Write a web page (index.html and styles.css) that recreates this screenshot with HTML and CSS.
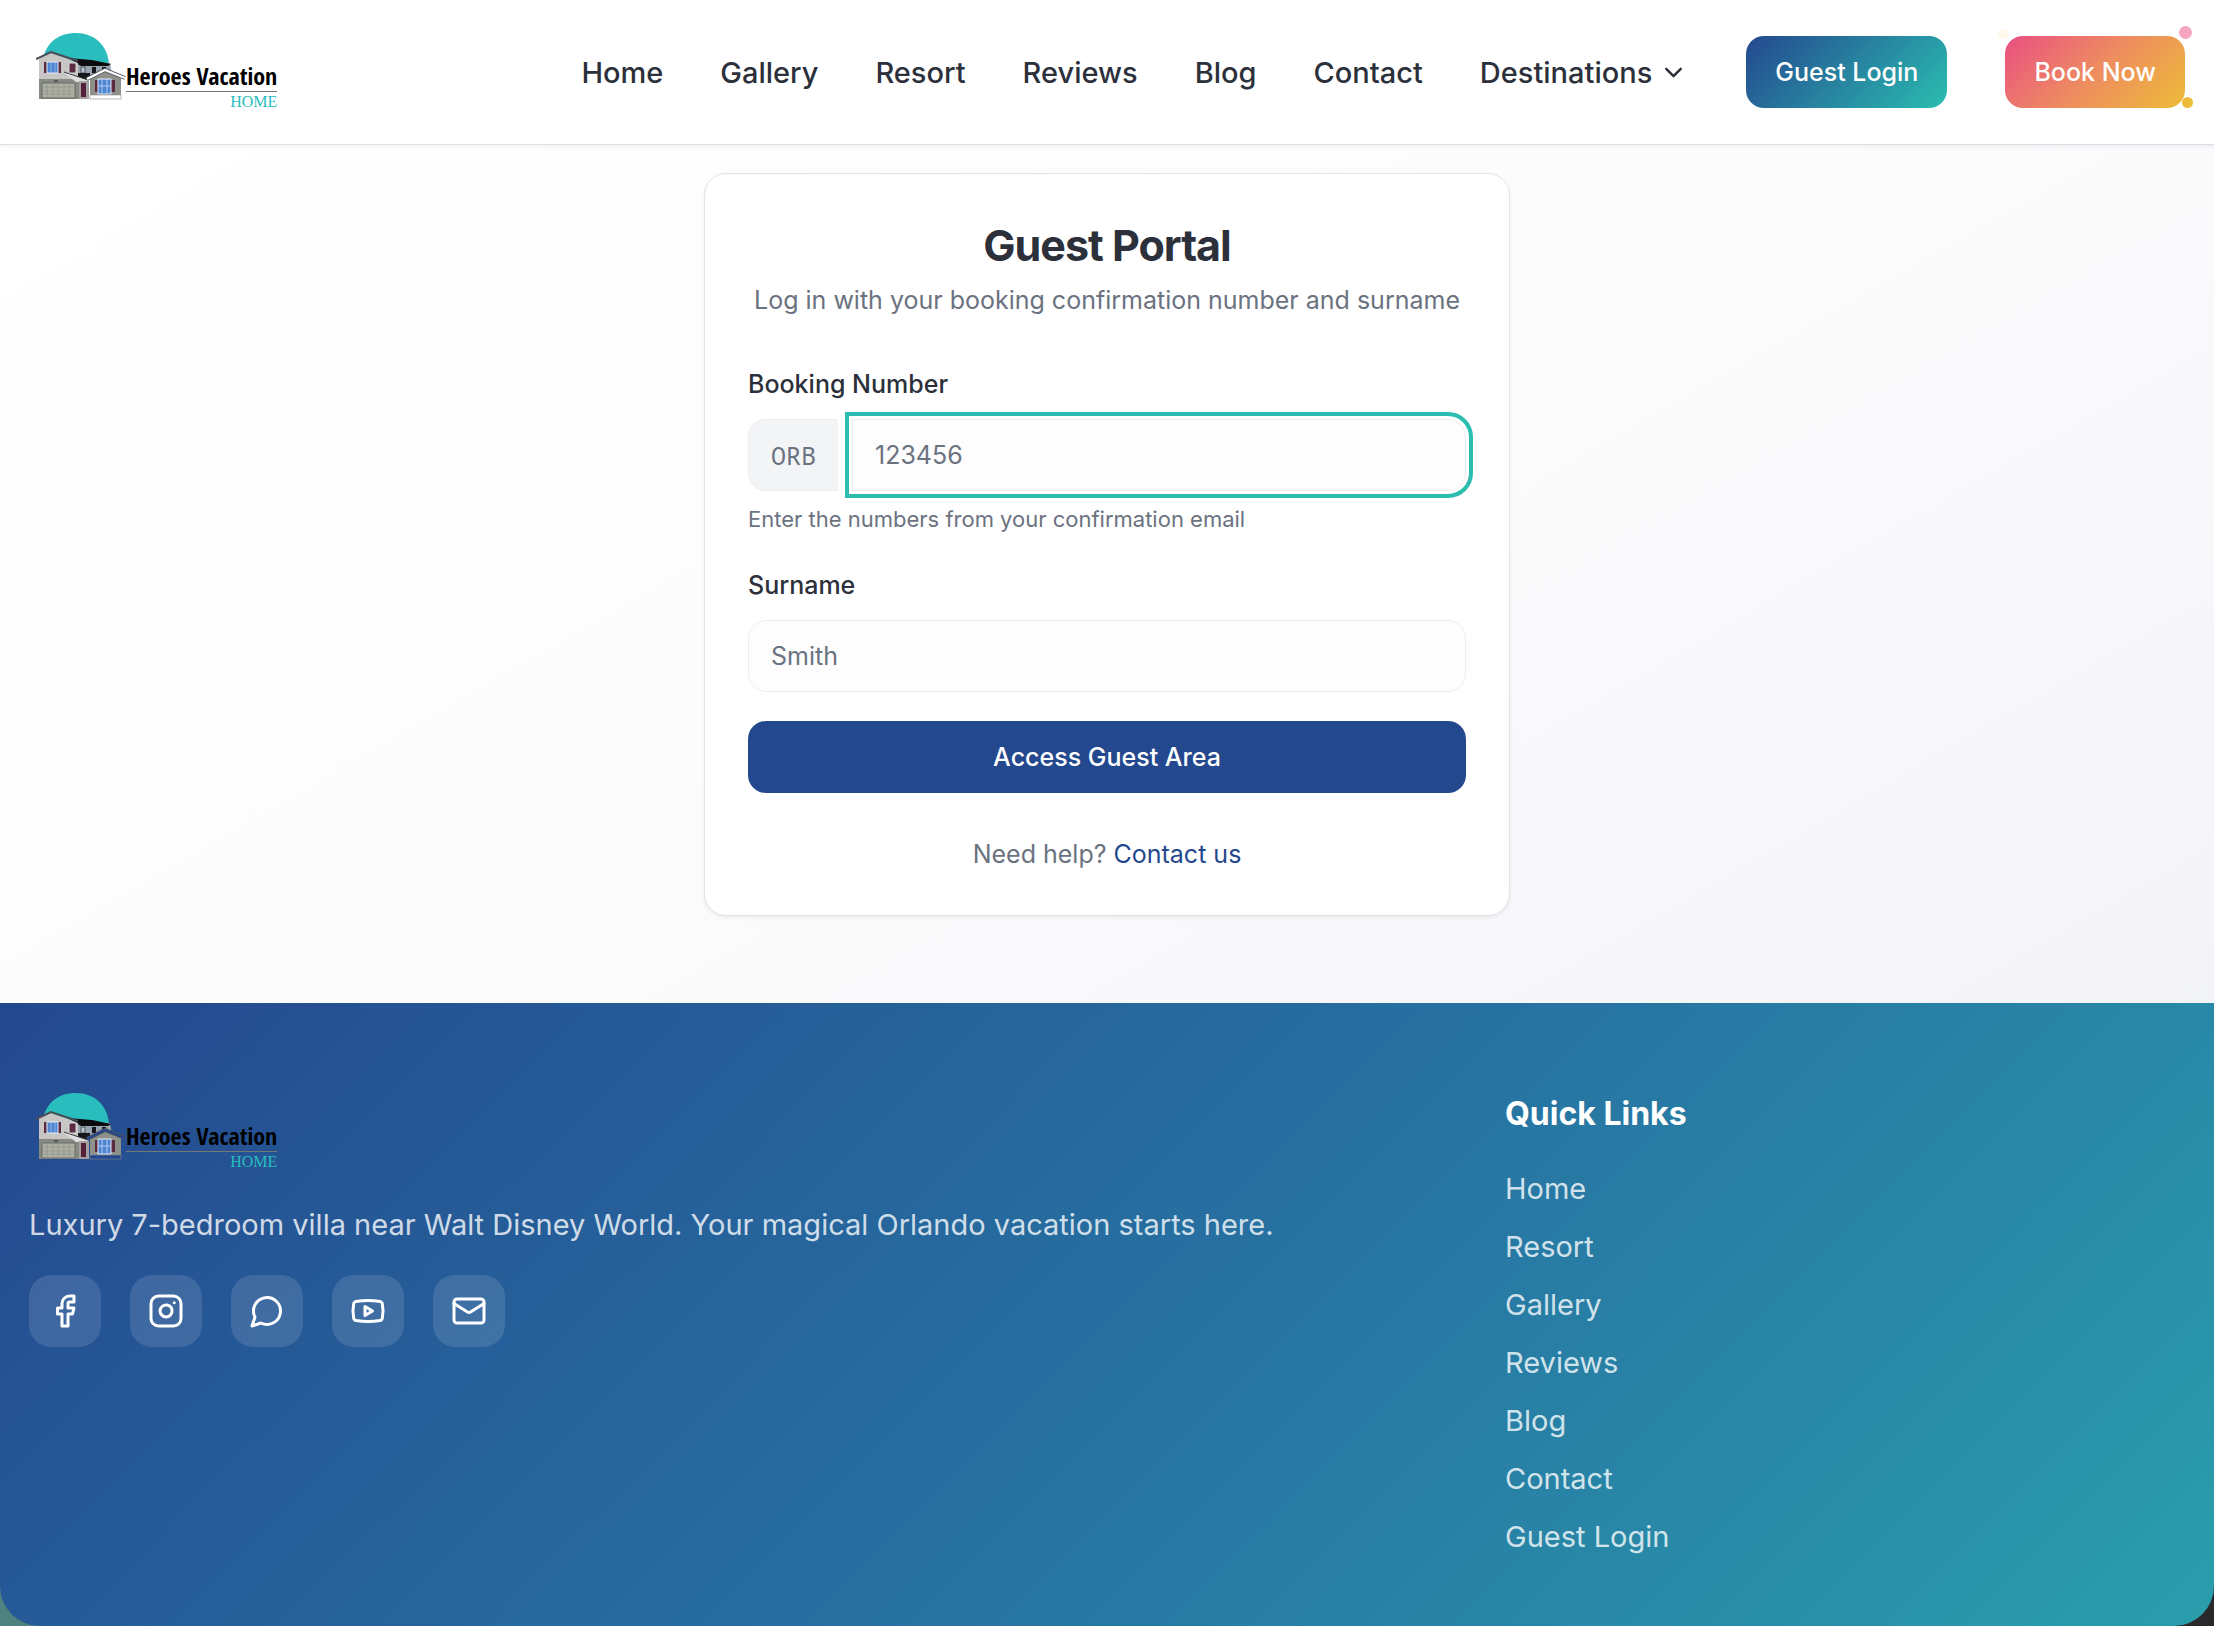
FILE: index.html
```html
<!DOCTYPE html>
<html lang="en">
<head>
    <meta charset="UTF-8">
    <meta name="viewport" content="width=device-width, initial-scale=1.0">
    <title>Guest Portal - Heroes Vacation Home</title>
    <link rel="stylesheet" href="styles.css">
</head>
<body>

    <!-- House drawing shared by header and footer -->
    <svg class="sprite" aria-hidden="true">
        <symbol id="house" viewBox="0 0 90 68">
            <path d="M7 26C10 10 22 0 40 0s32 12 33 32z" fill="#29bdbd"/>
            <path d="M40 30h34l2 12-14 4H40z" fill="#98a4b0"/>
            <path d="M32 25l24 2 19 4-3 2H45z" fill="#0c0c0e"/>
            <path d="M45 34h4v6h-4z" fill="#b9c3cc" stroke="#39414b" stroke-width=".8"/>
            <path d="M56 34h4v6h-4zM66 34h4v4h-4z" fill="#14161b"/>
            <path d="M38 40h16v6H43z" fill="#17171b"/>
            <path d="M3 25l12-5 17 6 10 4v16H3z" fill="#c8c6c5"/>
            <path d="M3 46h40v20H3z" fill="#858a83"/>
            <path d="M27 39l25 8v2H40z" fill="#dedede"/>
            <path d="M28 39l24 8" stroke="#3b3d42"/>
            <path d="M0 26l15-7 18 6 9 3" fill="none" stroke="#4a4d53" stroke-width="2"/>
            <path d="M8 29h17v11H8z" fill="#5b2b42"/>
            <path d="M11 29h11v11H11z" fill="#4f86d2" stroke="#e9eef8"/>
            <path d="M15 29v11M19 29v11" stroke="#a9c4ee" stroke-width=".7"/>
            <path d="M33 30h7v10h-7z" fill="#5b2b42" stroke="#dcdcdc"/>
            <path d="M6 50h33v15H6z" fill="#aeb0a4" stroke="#676b66"/>
            <path d="M6 54h33M6 58h33M6 61h33M11 50v15M17 50v15M22 50v15M28 50v15M33 50v15" stroke="#8f9187" stroke-width=".6"/>
            <path d="M18 48h4" stroke="#25272b"/>
            <path d="M43 48h10v18H43z" fill="#a3a09f"/>
            <path d="M45 50h5v14h-5z" fill="#541f38"/>
            <path d="M54 45l15-8 16 8v17H54z" fill="#8e918a"/>
            <path d="M51 46l18-9 20 8" fill="none" stroke="#505359" stroke-width="4"/>
            <path d="M51 46l18-9 20 8" fill="none" stroke="currentColor" stroke-width="2.4"/>
            <path d="M59 47h20v12H59z" fill="#5b2b42"/>
            <path d="M62 46h13v15H62z" fill="#4f86d2" stroke="#e9eef8"/>
            <path d="M66 46v15M71 46v15M62 53h13" stroke="#c8daf5" stroke-width=".8"/>
            <path d="M54 62h31v4H54z" fill="currentColor" stroke="#8a8c90" stroke-width=".6"/>
        </symbol>
    </svg>

    <header class="site-header">
        <a class="logo" href="#">
            <svg class="logo-house" aria-hidden="true"><use href="#house"/></svg>
            <span class="logo-text">
                <span class="logo-name">Heroes Vacation</span>
                <span class="logo-home">HOME</span>
            </span>
        </a>
        <nav class="main-nav">
            <div class="nav-links">
                <a href="#">Home</a>
                <a href="#">Gallery</a>
                <a href="#">Resort</a>
                <a href="#">Reviews</a>
                <a href="#">Blog</a>
                <a href="#">Contact</a>
                <button class="nav-menu" type="button">Destinations
                    <svg viewBox="0 0 24 24" aria-hidden="true"><path d="m6 9 6 6 6-6"/></svg>
                </button>
            </div>
            <a class="btn btn-login" href="#">Guest Login</a>
            <a class="btn btn-book" href="#">Book Now
                <span class="dot dot-cream"></span>
                <span class="dot dot-pink"></span>
                <span class="dot dot-yellow"></span>
            </a>
        </nav>
    </header>

    <main>
        <form class="card">
            <h1>Guest Portal</h1>
            <p class="intro">Log in with your booking confirmation number and surname</p>

            <div class="field">
                <label for="booking">Booking Number</label>
                <div class="booking-row">
                    <span class="prefix">ORB</span>
                    <input class="booking-input" type="text" id="booking" placeholder="123456">
                </div>
                <p class="hint">Enter the numbers from your confirmation email</p>
            </div>

            <div class="field">
                <label for="surname">Surname</label>
                <input type="text" id="surname" placeholder="Smith">
            </div>

            <button class="submit" type="submit">Access Guest Area</button>
            <p class="help">Need help? <a href="#">Contact us</a></p>
        </form>
    </main>

    <div class="footer-wrap">
        <footer>
            <div class="about">
                <a class="logo" href="#">
                    <svg class="logo-house" aria-hidden="true"><use href="#house"/></svg>
                    <span class="logo-text">
                        <span class="logo-name">Heroes Vacation</span>
                        <span class="logo-home">HOME</span>
                    </span>
                </a>
                <p>Luxury 7-bedroom villa near Walt Disney World. Your magical Orlando vacation starts here.</p>
                <div class="social">
                    <a href="#" aria-label="Facebook"><svg viewBox="0 0 24 24"><path d="M18 2h-3a5 5 0 0 0-5 5v3H7v4h3v8h4v-8h3l1-4h-4V7a1 1 0 0 1 1-1h3z"/></svg></a>
                    <a href="#" aria-label="Instagram"><svg viewBox="0 0 24 24"><rect x="2" y="2" width="20" height="20" rx="5"/><path d="M16 11.37A4 4 0 1 1 12.63 8 4 4 0 0 1 16 11.37z"/><path d="M17.5 6.5h.01"/></svg></a>
                    <a href="#" aria-label="WhatsApp"><svg viewBox="0 0 24 24"><path d="M7.9 20A9 9 0 1 0 4 16.1L2 22Z"/></svg></a>
                    <a href="#" aria-label="YouTube"><svg viewBox="0 0 24 24"><path d="M2.5 17a24.12 24.12 0 0 1 0-10 2 2 0 0 1 1.4-1.4 49.56 49.56 0 0 1 16.2 0A2 2 0 0 1 21.5 7a24.12 24.12 0 0 1 0 10 2 2 0 0 1-1.4 1.4 49.55 49.55 0 0 1-16.2 0A2 2 0 0 1 2.5 17"/><path d="m10 15 5-3-5-3z"/></svg></a>
                    <a href="#" aria-label="Email"><svg viewBox="0 0 24 24"><rect x="2" y="4" width="20" height="16" rx="2"/><path d="m22 7-8.97 5.7a1.94 1.94 0 0 1-2.06 0L2 7"/></svg></a>
                </div>
            </div>
            <div class="quick-links">
                <h2>Quick Links</h2>
                <ul>
                    <li><a href="#">Home</a></li>
                    <li><a href="#">Resort</a></li>
                    <li><a href="#">Gallery</a></li>
                    <li><a href="#">Reviews</a></li>
                    <li><a href="#">Blog</a></li>
                    <li><a href="#">Contact</a></li>
                    <li><a href="#">Guest Login</a></li>
                </ul>
            </div>
        </footer>
    </div>

</body>
</html>
```

FILE: styles.css
```css
* {
    margin: 0;
    padding: 0;
    box-sizing: border-box;
}

body {
    font-family: Inter, sans-serif;
    font-size: 29px;
    line-height: 43px;
    color: #2b303b;
    background: #fff;
    min-height: 100vh;
    display: flex;
    flex-direction: column;
}

a {
    color: inherit;
    text-decoration: none;
}

.sprite {
    position: absolute;
    width: 0;
    height: 0;
}

/* Header */
.site-header {
    position: relative;
    display: flex;
    justify-content: space-between;
    align-items: center;
    height: 145px;
    padding: 0 29px;
    background: #fff;
    border-bottom: 1px solid #dcdfe8;
    box-shadow: 0 2px 4px rgba(0, 0, 0, 0.05);
}

.logo {
    display: flex;
    align-items: flex-start;
    padding-left: 7px;
}

.logo-house {
    width: 90px;
    height: 68px;
    color: #fff;
}

.logo-text {
    display: flex;
    flex-direction: column;
    padding-top: 28px;
}

.logo-name {
    font-family: "Liberation Sans Narrow", "Open Sans Condensed", "Liberation Sans", sans-serif;
    font-size: 24px;
    font-weight: bold;
    line-height: 30px;
    color: #000;
    border-bottom: 1px solid #777;
}

.logo-home {
    font-family: "Liberation Serif", serif;
    font-size: 16px;
    line-height: 20px;
    color: #29bdbd;
    text-align: right;
}

.main-nav,
.nav-links {
    display: flex;
    align-items: center;
    font-weight: 500;
}

.main-nav {
    gap: 58px;
}

.nav-links {
    gap: 57px;
}

.nav-menu {
    display: flex;
    align-items: center;
    gap: 7px;
    border: none;
    background: none;
    font: inherit;
    color: inherit;
}

.nav-menu svg {
    width: 29px;
    height: 29px;
    fill: none;
    stroke: currentColor;
    stroke-width: 2;
    stroke-linecap: round;
    stroke-linejoin: round;
}

.btn {
    position: relative;
    height: 72px;
    padding: 0 29px;
    border-radius: 18px;
    font-size: 25px;
    line-height: 72px;
    color: #fff;
}

.btn-login {
    background: linear-gradient(135deg, #24488f, #2abdb0);
}

.btn-book {
    background: linear-gradient(135deg, #e94f82, #ee8c60 50%, #edbb38);
}

.dot {
    position: absolute;
    border-radius: 50%;
}

.dot-cream {
    top: -7px;
    left: -7px;
    width: 10px;
    height: 10px;
    background: #fff9ea;
}

.dot-pink {
    top: -10px;
    right: -7px;
    width: 13px;
    height: 13px;
    background: #f6a6c2;
}

.dot-yellow {
    right: -8px;
    bottom: 0;
    width: 11px;
    height: 11px;
    background: #edbb38;
}

/* Login card */
main {
    padding: 28px 29px 87px;
    background: linear-gradient(150deg, #fff, #fcfcfd 50%, #f3f4f8);
}

.card {
    max-width: 806px;
    margin: 0 auto;
    padding: 43px;
    border: 1px solid #e0e3e8;
    border-radius: 22px;
    background: #fff;
    box-shadow: 0 2px 4px rgba(0, 0, 0, 0.06);
    font-size: 25px;
    line-height: 36px;
}

.card h1 {
    font-size: 43px;
    line-height: 56px;
    letter-spacing: -1px;
    text-align: center;
}

.intro {
    margin: 9px 0 48px;
    text-align: center;
    color: #6b7280;
}

.field {
    margin-bottom: 29px;
}

.card label {
    display: block;
    margin-bottom: 17px;
    font-weight: 500;
}

.booking-row {
    display: flex;
    gap: 14px;
}

.prefix {
    padding: 0 22px;
    border: 1px solid #ecedf0;
    border-right: none;
    border-radius: 18px 0 0 18px;
    background: #f3f4f6;
    font-family: "Noto Sans Mono", "DejaVu Sans Mono", monospace;
    line-height: 70px;
    color: #6b7280;
}

.card input {
    display: block;
    width: 100%;
    height: 72px;
    padding: 0 22px;
    border: 1px solid #ecedf0;
    border-radius: 18px;
    background: #fdfdfd;
    font: inherit;
}

.card input::placeholder {
    color: #6b7280;
}

.card .booking-input {
    border-radius: 0 18px 18px 0;
    outline: 4px solid #2abdb0;
    outline-offset: 3px;
}

.hint {
    margin: 14px 0 33px;
    font-size: 22px;
    line-height: 29px;
    color: #6b7280;
}

.submit {
    display: block;
    width: 100%;
    height: 72px;
    border: none;
    border-radius: 18px;
    background: #24488d;
    color: #fff;
    font: inherit;
    font-weight: 500;
}

.help {
    margin-top: 43px;
    text-align: center;
    color: #6b7280;
}

.help a {
    color: #24488d;
}

/* Footer */
.footer-wrap {
    flex: 1;
    display: flex;
    background: linear-gradient(90deg, #4d8280 50%, #29292b 50%);
}

footer {
    flex: 1;
    display: grid;
    grid-template-columns: 2fr 1fr;
    gap: 116px;
    padding: 86px 29px 43px;
    border-radius: 0 0 40px 40px;
    background: linear-gradient(135deg, #24488f, #2773a2 55%, #2a9eac);
    color: rgba(255, 255, 255, 0.8);
}

footer .logo {
    padding-top: 4px;
}

footer .logo-house {
    color: #24488f;
}

.about p {
    margin-top: 31px;
}

.social {
    display: flex;
    gap: 29px;
    margin-top: 29px;
}

.social a {
    display: flex;
    align-items: center;
    justify-content: center;
    width: 72px;
    height: 72px;
    border-radius: 22px;
    background: rgba(255, 255, 255, 0.12);
    color: #fff;
}

.social svg {
    width: 36px;
    height: 36px;
    fill: none;
    stroke: currentColor;
    stroke-width: 2;
    stroke-linecap: round;
    stroke-linejoin: round;
}

.quick-links h2 {
    font-size: 32px;
    line-height: 50px;
    color: #fff;
}

.quick-links ul {
    display: flex;
    flex-direction: column;
    gap: 15px;
    margin-top: 28px;
    list-style: none;
}
```
